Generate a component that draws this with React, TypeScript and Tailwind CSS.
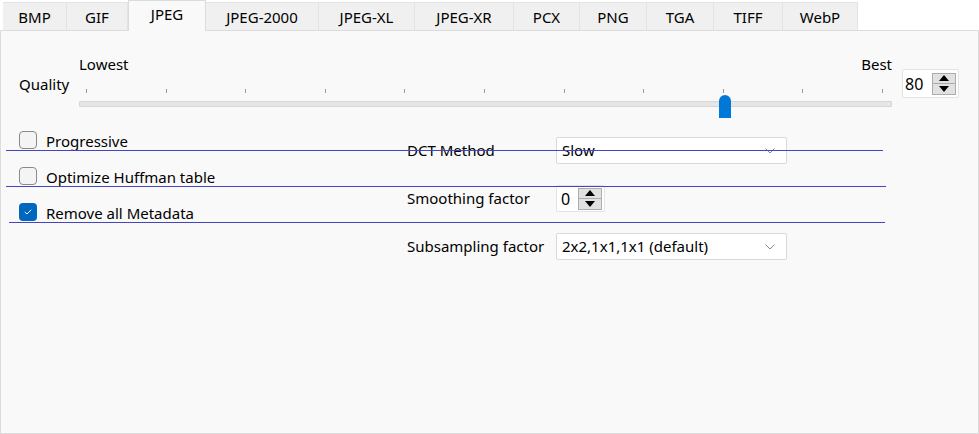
import React from "react";

const tabs: { name: string; w: number }[] = [
  { name: "BMP", w: 64 },
  { name: "GIF", w: 61 },
  { name: "JPEG", w: 78 },
  { name: "JPEG-2000", w: 113 },
  { name: "JPEG-XL", w: 96 },
  { name: "JPEG-XR", w: 99 },
  { name: "PCX", w: 66 },
  { name: "PNG", w: 67 },
  { name: "TGA", w: 67 },
  { name: "TIFF", w: 69 },
  { name: "WebP", w: 75 },
];

function SpinArrows() {
  return (
    <div className="flex flex-col w-[24px] h-[22px] border border-[#adadad] bg-[#e1e1e1]">
      <div className="flex-1 flex items-center justify-center border-b border-[#adadad]">
        <svg width="10" height="6" viewBox="0 0 10 6">
          <polygon points="0,6 10,6 5,0" fill="#000" />
        </svg>
      </div>
      <div className="flex-1 flex items-center justify-center">
        <svg width="10" height="6" viewBox="0 0 10 6">
          <polygon points="0,0 10,0 5,6" fill="#000" />
        </svg>
      </div>
    </div>
  );
}

function Chevron() {
  return (
    <svg width="10" height="6" viewBox="0 0 10 6" className="mr-[11px]">
      <polyline points="0.5,0.5 5,5 9.5,0.5" fill="none" stroke="#8a8a8a" strokeWidth="1" />
    </svg>
  );
}

function Combo({ text }: { text: string }) {
  return (
    <div className="w-[231px] h-[27px] bg-white border border-[#d9d9d9] rounded-[2px] flex items-center justify-between pl-[5px]">
      <span>{text}</span>
      <Chevron />
    </div>
  );
}

function Check({ checked, label }: { checked?: boolean; label: string }) {
  return (
    <div className="flex items-center h-[18px]">
      {checked ? (
        <div className="w-[18px] h-[18px] rounded-[4px] bg-[#0067c0] flex items-center justify-center">
          <svg width="8" height="6" viewBox="0 0 8 6">
            <polyline points="0.8,3 3,5 7.2,0.8" fill="none" stroke="#fff" strokeWidth="1" />
          </svg>
        </div>
      ) : (
        <div className="w-[18px] h-[18px] rounded-[4px] border border-[#8a8a8a] bg-[#f4f4f4]" />
      )}
      <span className="ml-[9px] leading-[18px] mt-[2px]">{label}</span>
    </div>
  );
}

export default function App() {
  const ticks = Array.from({ length: 11 }, (_, i) => i);
  return (
    <div
      className="relative w-[979px] h-[434px] bg-white text-[15px] text-black overflow-hidden"
      style={{ fontFamily: '"Noto Sans", "Liberation Sans", sans-serif' }}
    >
      {/* tab bar */}
      <div className="flex items-end h-[31px] pl-[3px] relative z-10">
        {tabs.map((t) =>
          t.name === "JPEG" ? (
            <div
              key={t.name}
              style={{ width: t.w }}
              className="h-[31px] bg-[#f9f9f9] border border-b-0 border-[#dcdcdc] flex items-center justify-center pb-[3px]"
            >
              {t.name}
            </div>
          ) : (
            <div
              key={t.name}
              style={{ width: t.w }}
              className="h-[28px] mb-[1px] bg-[#f0f0f0] border-t border-r border-[#e3e3e3] flex items-center justify-center pt-[1px]"
            >
              {t.name}
            </div>
          )
        )}
      </div>

      {/* pane */}
      <div className="-mt-[1px] h-[404px] w-[979px] bg-[#f9f9f9] border border-[#dcdcdc] relative">
        {/* quality row */}
        <div className="flex items-start pl-[18px] mt-[23px]">
          <div className="w-[60px] mt-[20px] leading-[20px]">Quality</div>
          <div className="relative w-[813px] h-[63px]">
            <div className="flex justify-between h-[20px] leading-[20px]">
              <span>Lowest</span>
              <span>Best</span>
            </div>
            <div className="flex justify-between pl-[7px] pr-[9px] mt-[15px] h-[4px]">
              {ticks.map((i) => (
                <div key={i} className="w-[1px] h-[4px] bg-[#9a9a9a]" />
              ))}
            </div>
            <div className="mt-[8px] h-[6px] bg-[#e6e6e6] border border-[#d6d6d6] rounded-[1px]" />
            <div className="absolute left-[640px] top-[41px] w-[12px] h-[23px] bg-[#0078d7] rounded-t-[6px]" />
          </div>
          <div className="ml-[10px] mt-[15px] w-[57px] h-[29px] bg-white border border-[#e3e3e3] rounded-[2px] flex items-center justify-between pl-[2px] pr-[2px] text-[16px]">
            <span>80</span>
            <SpinArrows />
          </div>
        </div>

        {/* options */}
        <div className="flex mt-[1px]">
          <div className="flex flex-col pl-[18px] pt-[13px] gap-[18px] w-[406px]">
            <Check label="Progressive" />
            <Check label="Optimize Huffman table" />
            <Check checked label="Remove all Metadata" />
          </div>
          <div className="grid grid-cols-[149px_231px] gap-y-[21px] items-center pt-[19px]">
            <div>DCT Method</div>
            <Combo text="Slow" />
            <div>Smoothing factor</div>
            <div className="w-[49px] h-[27px] bg-white border border-[#e3e3e3] rounded-[2px] flex items-center justify-between pl-[4px] pr-[2px] text-[16px]">
              <span>0</span>
              <SpinArrows />
            </div>
            <div>Subsampling factor</div>
            <Combo text="2x2,1x1,1x1 (default)" />
          </div>
        </div>
      </div>

      {/* blue overlay lines */}
      <div className="absolute left-[6px] top-[150px] w-[877px] h-[1px] bg-[#4545c0]" />
      <div className="absolute left-[6px] top-[186px] w-[880px] h-[1px] bg-[#4545c0]" />
      <div className="absolute left-[9px] top-[222px] w-[876px] h-[1px] bg-[#4545c0]" />
    </div>
  );
}
